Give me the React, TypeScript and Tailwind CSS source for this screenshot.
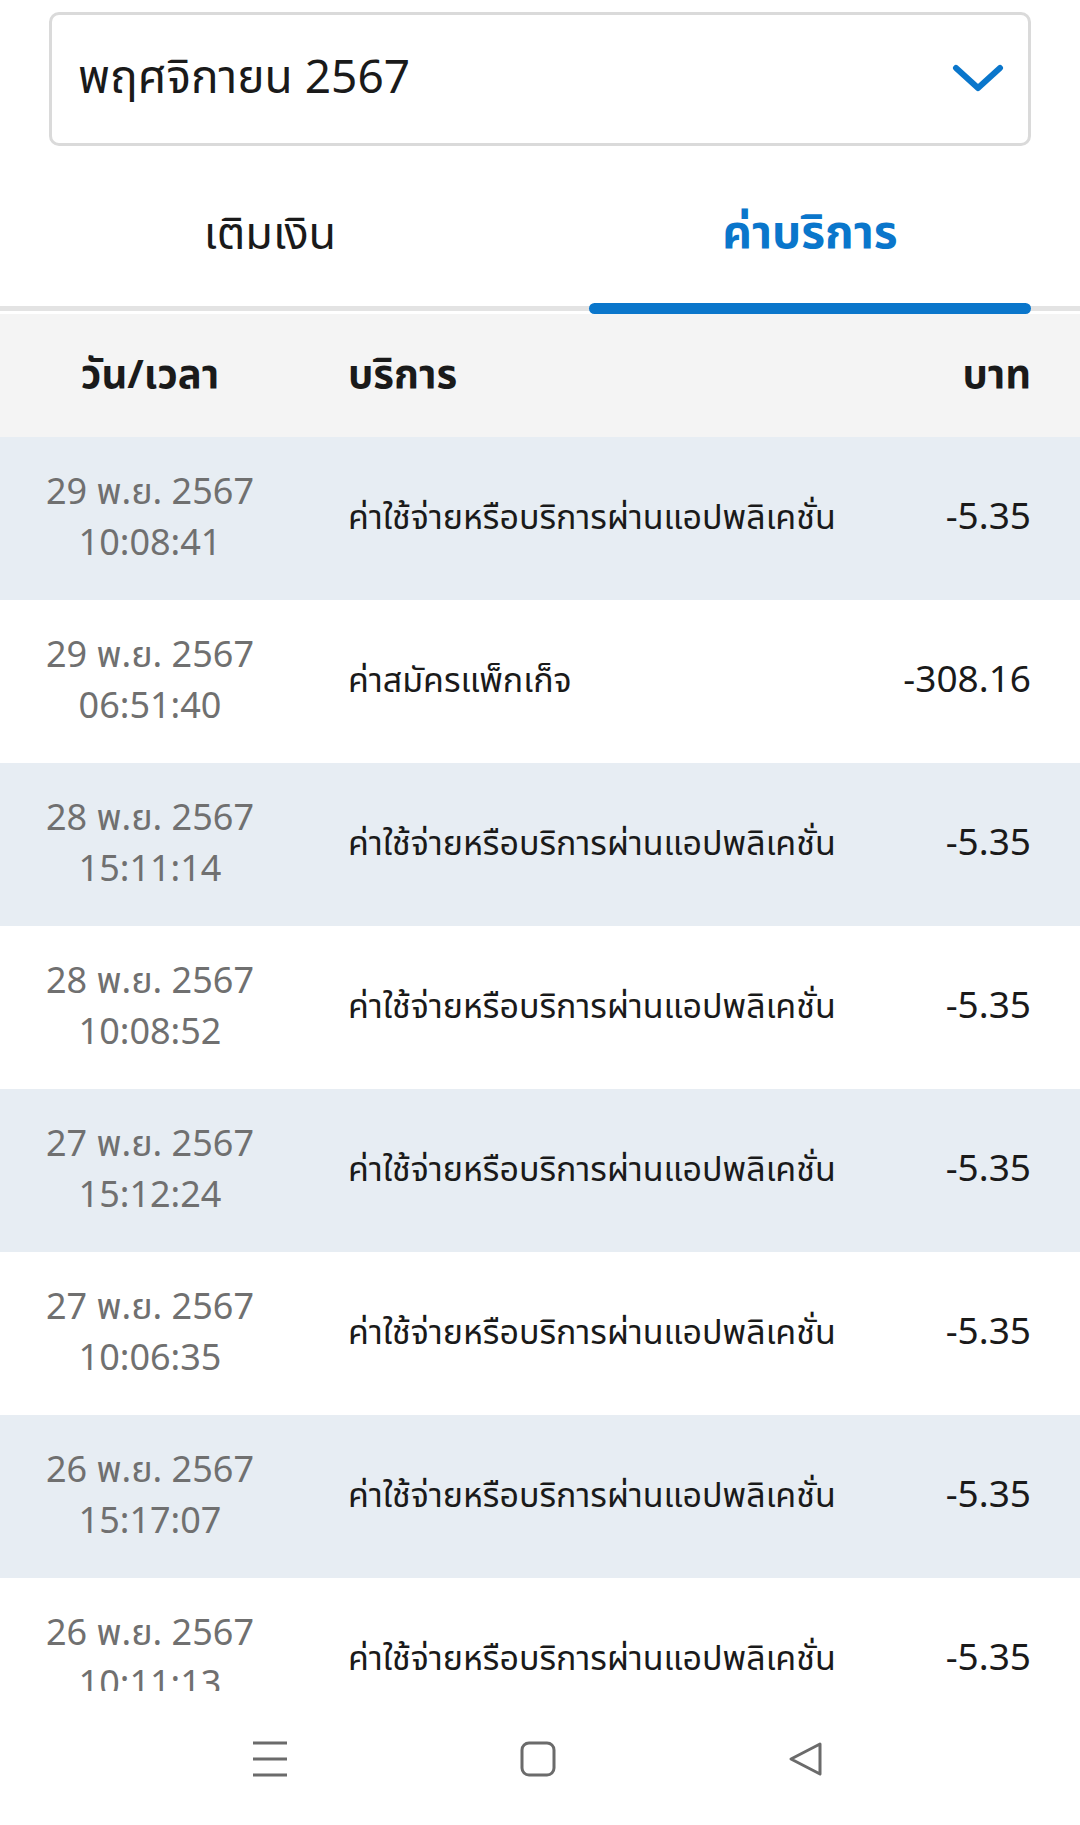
type Row = { date: string; time: string; service: string; amount: string };

const APP_FEE = "ค่าใช้จ่ายหรือบริการผ่านแอปพลิเคชั่น";

const rows: Row[] = [
  { date: "29 พ.ย. 2567", time: "10:08:41", service: APP_FEE, amount: "-5.35" },
  { date: "29 พ.ย. 2567", time: "06:51:40", service: "ค่าสมัครแพ็กเก็จ", amount: "-308.16" },
  { date: "28 พ.ย. 2567", time: "15:11:14", service: APP_FEE, amount: "-5.35" },
  { date: "28 พ.ย. 2567", time: "10:08:52", service: APP_FEE, amount: "-5.35" },
  { date: "27 พ.ย. 2567", time: "15:12:24", service: APP_FEE, amount: "-5.35" },
  { date: "27 พ.ย. 2567", time: "10:06:35", service: APP_FEE, amount: "-5.35" },
  { date: "26 พ.ย. 2567", time: "15:17:07", service: APP_FEE, amount: "-5.35" },
  { date: "26 พ.ย. 2567", time: "10:11:13", service: APP_FEE, amount: "-5.35" },
];

function NavBar() {
  return (
    <div className="h-[134px] shrink-0 bg-white flex items-center justify-center gap-[231px] pt-[2px] pr-[6px]">
      <svg width="38" height="36" viewBox="0 0 38 36">
        <path d="M2 2h34M2 18h34M2 34h34" stroke="#6b6b6b" strokeWidth="3" />
      </svg>
      <svg width="36" height="36" viewBox="0 0 36 36">
        <rect x="2" y="2" width="32" height="32" rx="7" fill="none" stroke="#6b6b6b" strokeWidth="3" />
      </svg>
      <svg width="36" height="36" viewBox="0 0 36 36">
        <path d="M33 3 L4 18 L33 33 Z" fill="none" stroke="#6b6b6b" strokeWidth="3" strokeLinejoin="round" />
      </svg>
    </div>
  );
}

export default function App() {
  return (
    <div
      className="w-[1080px] h-[1825px] bg-white flex flex-col overflow-hidden"
      style={{ fontFamily: '"Noto Sans Thai", "Noto Sans", Roboto, sans-serif' }}
    >
      <div className="px-[49px] pt-[12px]">
        <div className="h-[134px] rounded-[10px] border-[3px] border-[#dadada] flex items-center justify-between pl-[26px] pr-[24px]">
          <span className="text-[46px] text-[#1a1a1a]">พฤศจิกายน 2567</span>
          <svg width="52" height="28" viewBox="0 0 52 28" className="mb-[2px]">
            <path
              d="M4 4 L26 24 L48 4"
              fill="none"
              stroke="#0a76cb"
              strokeWidth="6"
              strokeLinecap="round"
              strokeLinejoin="round"
            />
          </svg>
        </div>
      </div>

      <div className="h-[157px] px-[49px] flex items-end justify-between pb-[34px]">
        <div className="w-[442px] text-center text-[45px] text-[#1a1a1a]">เติมเงิน</div>
        <div className="w-[442px] text-center text-[46px] font-bold text-[#0a76cb]">ค่าบริการ</div>
      </div>

      <div className="relative h-[11px] flex items-center">
        <div className="h-[5px] w-full bg-[#e3e3e3]" />
        <div className="absolute right-[49px] top-0 h-[11px] w-[442px] rounded-full bg-[#0a76cb]" />
      </div>

      <div className="h-[123px] bg-[#f4f4f4] flex items-center pr-[49px] text-[40px] font-bold text-[#1a1a1a]">
        <div className="w-[300px] text-center">วัน/เวลา</div>
        <div className="ml-[48px] flex-1">บริการ</div>
        <div>บาท</div>
      </div>

      <div className="flex-1 overflow-hidden">
        {rows.map((r, i) => (
          <div
            key={i}
            className={`h-[163px] flex items-center pr-[49px] ${i % 2 === 0 ? "bg-[#e7edf3]" : "bg-white"}`}
          >
            <div className="w-[300px] text-center text-[36px] leading-[51px] text-[#707070]">
              <div>{r.date}</div>
              <div>{r.time}</div>
            </div>
            <div className="ml-[48px] flex-1 text-[34px] text-[#1a1a1a]">{r.service}</div>
            <div className="text-[37px] text-[#1a1a1a]">{r.amount}</div>
          </div>
        ))}
      </div>

      <NavBar />
    </div>
  );
}
